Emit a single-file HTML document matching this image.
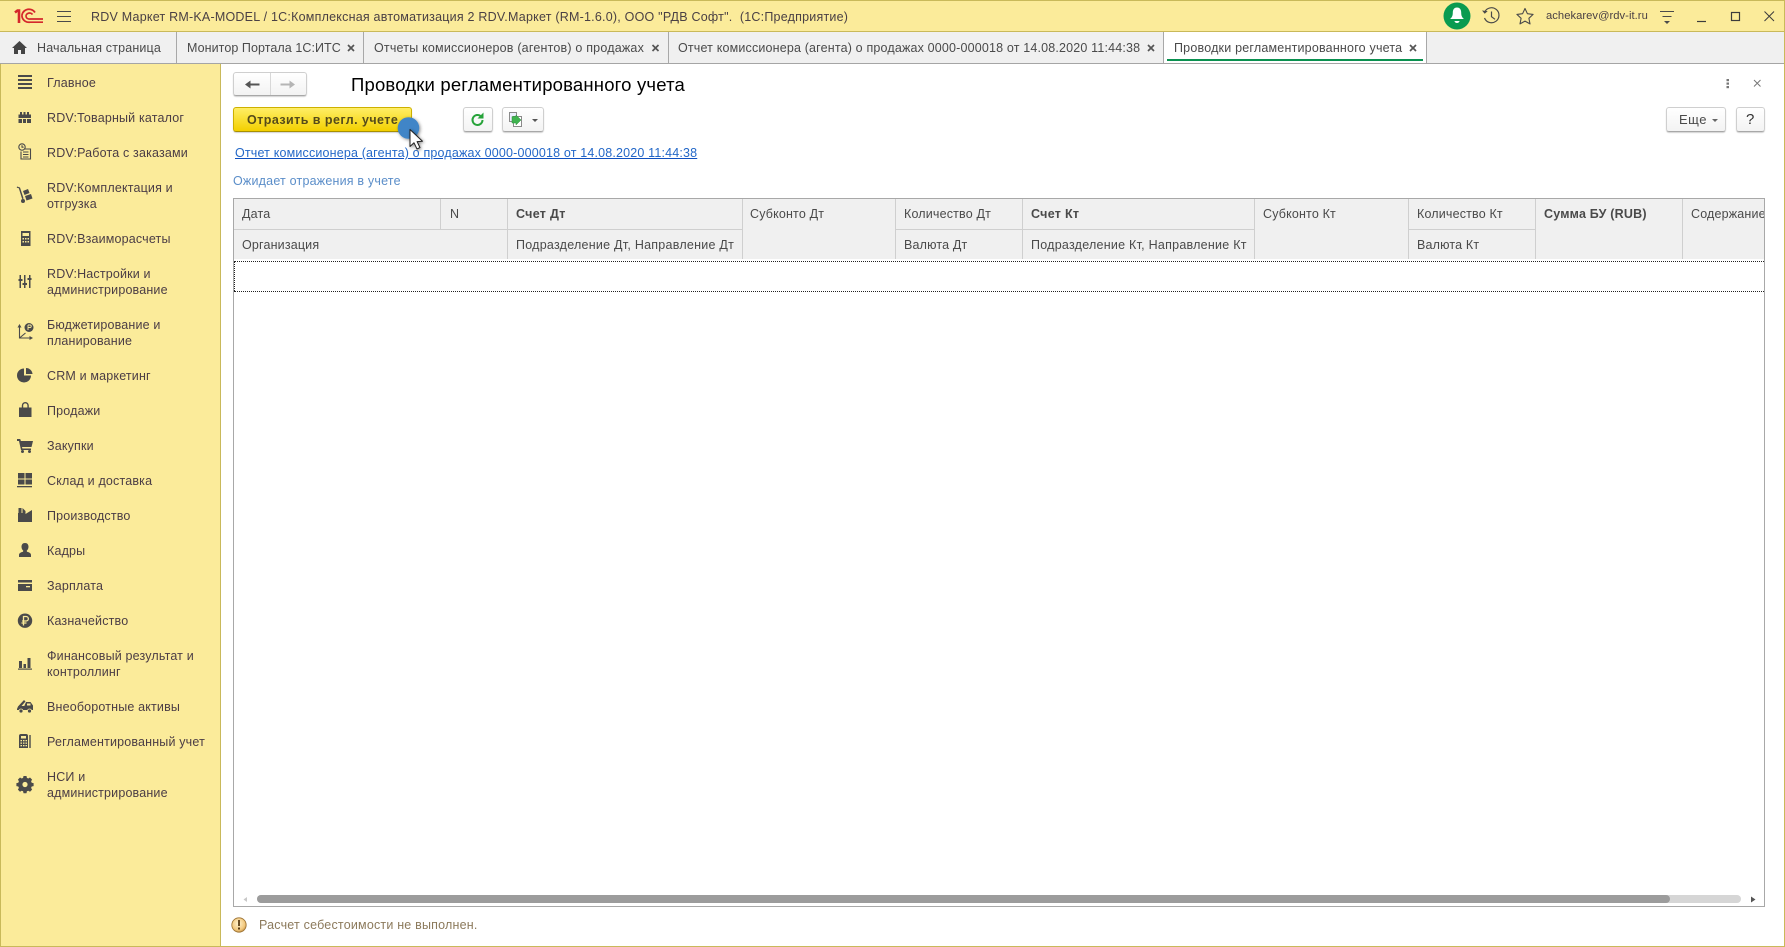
<!DOCTYPE html>
<html lang="ru"><head><meta charset="utf-8"><title>Проводки регламентированного учета</title>
<style>
html,body{margin:0;padding:0;background:#fff}
body{width:1785px;height:947px;position:relative;overflow:hidden;font-family:"Liberation Sans",Arial,sans-serif;font-size:12.5px;letter-spacing:.17px;color:#4a4044}
.b{position:absolute;box-sizing:border-box}
.t{position:absolute;white-space:nowrap;line-height:16px;height:16px}
.s .t{color:#4b3d45}
.h{color:#4a4a4a}
.g{font-weight:bold;letter-spacing:.2px}
.btn{position:absolute;box-sizing:border-box;border:1px solid #cfcfcf;border-bottom:1px solid #a8a8a8;border-radius:3px;background:linear-gradient(#fff,#f3f3f3);box-shadow:0 1px 1px rgba(0,0,0,.18)}
svg{position:absolute;left:0;top:0}
</style></head><body>

<div class="b" style="left:0;top:0;width:1785px;height:32px;background:#fbeb9a;border-top:1px solid #c9b95a;border-bottom:1px solid #c9b95a"></div>
<div class="b" style="left:0;top:32px;width:1785px;height:32px;background:#f0f0f0;border-bottom:1px solid #a5a5a5"></div>
<div class="b" style="left:1164px;top:32px;width:262px;height:31px;background:#fff"></div>
<div class="b" style="left:176px;top:32px;width:1px;height:31px;background:#a8a8a8"></div>
<div class="b" style="left:363px;top:32px;width:1px;height:31px;background:#a8a8a8"></div>
<div class="b" style="left:668px;top:32px;width:1px;height:31px;background:#a8a8a8"></div>
<div class="b" style="left:1163px;top:32px;width:1px;height:31px;background:#a8a8a8"></div>
<div class="b" style="left:1426px;top:32px;width:1px;height:31px;background:#a8a8a8"></div>
<div class="b" style="left:1167px;top:59px;width:256px;height:2px;background:#0a9150"></div>

<div class="b" style="left:0;top:64px;width:221px;height:883px;background:#fbeb9a;border-left:1px solid #c9b95a;border-right:1px solid #c9b95a"></div>
<div class="b" style="left:0;top:946px;width:1785px;height:1px;background:#c9b95a"></div>
<div class="b" style="left:1784px;top:0;width:1px;height:947px;background:#c9b95a"></div>

<div class="t" style="left:91px;top:9px;letter-spacing:.22px">RDV Маркет RM-KA-MODEL / 1С:Комплексная автоматизация 2 RDV.Маркет (RM-1.6.0), ООО "РДВ Софт".&nbsp; (1С:Предприятие)</div>
<div class="t" style="left:1546px;top:8px;font-size:11.2px;letter-spacing:.05px">achekarev@rdv-it.ru</div>
<div class="t h" style="left:37px;top:40px">Начальная страница</div>
<div class="t h" style="left:187px;top:40px;letter-spacing:.07px">Монитор Портала 1С:ИТС</div>
<div class="t h" style="left:374px;top:40px;letter-spacing:.2px">Отчеты комиссионеров (агентов) о продажах</div>
<div class="t h" style="left:678px;top:40px">Отчет комиссионера (агента) о продажах 0000-000018 от 14.08.2020 11:44:38</div>
<div class="t h" style="left:1174px;top:40px;letter-spacing:.2px">Проводки регламентированного учета</div>

<div class="s">
<div class="t" style="left:47px;top:75px">Главное</div>
<div class="t" style="left:47px;top:110px">RDV:Товарный каталог</div>
<div class="t" style="left:47px;top:145px">RDV:Работа с заказами</div>
<div class="t" style="left:47px;top:180px">RDV:Комплектация и</div>
<div class="t" style="left:47px;top:196px">отгрузка</div>
<div class="t" style="left:47px;top:231px">RDV:Взаиморасчеты</div>
<div class="t" style="left:47px;top:266px">RDV:Настройки и</div>
<div class="t" style="left:47px;top:282px">администрирование</div>
<div class="t" style="left:47px;top:317px">Бюджетирование и</div>
<div class="t" style="left:47px;top:333px">планирование</div>
<div class="t" style="left:47px;top:368px">CRM и маркетинг</div>
<div class="t" style="left:47px;top:403px">Продажи</div>
<div class="t" style="left:47px;top:438px">Закупки</div>
<div class="t" style="left:47px;top:473px">Склад и доставка</div>
<div class="t" style="left:47px;top:508px">Производство</div>
<div class="t" style="left:47px;top:543px">Кадры</div>
<div class="t" style="left:47px;top:578px">Зарплата</div>
<div class="t" style="left:47px;top:613px">Казначейство</div>
<div class="t" style="left:47px;top:648px">Финансовый результат и</div>
<div class="t" style="left:47px;top:664px">контроллинг</div>
<div class="t" style="left:47px;top:699px">Внеоборотные активы</div>
<div class="t" style="left:47px;top:734px">Регламентированный учет</div>
<div class="t" style="left:47px;top:769px">НСИ и</div>
<div class="t" style="left:47px;top:785px">администрирование</div>
</div>

<div class="t" style="left:351px;top:74px;font-size:18.5px;letter-spacing:.18px;line-height:22px;height:22px;color:#000">Проводки регламентированного учета</div>

<div class="btn" style="left:233px;top:72px;width:74px;height:24px"></div>
<div class="b" style="left:270px;top:73px;width:1px;height:22px;background:#d8d8d8"></div>
<div class="btn" style="left:233px;top:107px;width:179px;height:25px;background:linear-gradient(#ffee66,#f3d000);border:1px solid #cdb000;border-bottom-color:#a89000"></div>
<div class="t g" style="left:247px;top:112px;color:#554b1a;letter-spacing:.45px">Отразить в регл. учете</div>
<div class="btn" style="left:463px;top:107px;width:30px;height:25px"></div>
<div class="btn" style="left:502px;top:107px;width:42px;height:25px"></div>
<div class="btn" style="left:1666px;top:107px;width:60px;height:25px"></div>
<div class="t" style="left:1679px;top:112px;color:#4a4a4a;font-size:13px;letter-spacing:.5px">Еще</div>
<div class="btn" style="left:1736px;top:107px;width:29px;height:25px"></div>
<div class="t" style="left:1746px;top:112px;color:#333;font-size:15px">?</div>

<div class="t" style="left:235px;top:145px;color:#2468c8;text-decoration:underline;text-decoration-color:#0f50c0">Отчет комиссионера (агента) о продажах 0000-000018 от 14.08.2020 11:44:38</div>
<div class="t" style="left:233px;top:173px;color:#5b8ec9;letter-spacing:.2px">Ожидает отражения в учете</div>

<div class="b" style="left:233px;top:198px;width:1532px;height:709px;border:1px solid #a8a8a8;overflow:hidden;background:#fff">
  <div class="b" style="left:0;top:0;width:1530px;height:60px;background:#f0f0f0"></div>
  <div class="b" style="left:0;top:30px;width:274px;height:1px;background:#cfcfcf"></div>
  <div class="b" style="left:274px;top:30px;width:234px;height:1px;background:#cfcfcf"></div>
  <div class="b" style="left:661px;top:30px;width:127px;height:1px;background:#cfcfcf"></div>
  <div class="b" style="left:788px;top:30px;width:232px;height:1px;background:#cfcfcf"></div>
  <div class="b" style="left:1174px;top:30px;width:127px;height:1px;background:#cfcfcf"></div>
  <div class="b" style="left:206px;top:0;width:1px;height:30px;background:#cfcfcf"></div>
  <div class="b" style="left:273px;top:0;width:1px;height:60px;background:#cfcfcf"></div>
  <div class="b" style="left:508px;top:0;width:1px;height:60px;background:#cfcfcf"></div>
  <div class="b" style="left:661px;top:0;width:1px;height:60px;background:#cfcfcf"></div>
  <div class="b" style="left:788px;top:0;width:1px;height:60px;background:#cfcfcf"></div>
  <div class="b" style="left:1020px;top:0;width:1px;height:60px;background:#cfcfcf"></div>
  <div class="b" style="left:1174px;top:0;width:1px;height:60px;background:#cfcfcf"></div>
  <div class="b" style="left:1301px;top:0;width:1px;height:60px;background:#cfcfcf"></div>
  <div class="b" style="left:1448px;top:0;width:1px;height:60px;background:#cfcfcf"></div>
  <div class="t h" style="left:8px;top:7px">Дата</div>
  <div class="t h" style="left:216px;top:7px">N</div>
  <div class="t h g" style="left:282px;top:7px;letter-spacing:.3px">Счет Дт</div>
  <div class="t h" style="left:516px;top:7px">Субконто Дт</div>
  <div class="t h" style="left:670px;top:7px">Количество Дт</div>
  <div class="t h g" style="left:797px;top:7px;letter-spacing:.3px">Счет Кт</div>
  <div class="t h" style="left:1029px;top:7px">Субконто Кт</div>
  <div class="t h" style="left:1183px;top:7px">Количество Кт</div>
  <div class="t h g" style="left:1310px;top:7px">Сумма БУ (RUB)</div>
  <div class="t h" style="left:1457px;top:7px">Содержание</div>
  <div class="t h" style="left:8px;top:38px">Организация</div>
  <div class="t h" style="left:282px;top:38px;letter-spacing:.25px">Подразделение Дт, Направление Дт</div>
  <div class="t h" style="left:670px;top:38px">Валюта Дт</div>
  <div class="t h" style="left:797px;top:38px;letter-spacing:.25px">Подразделение Кт, Направление Кт</div>
  <div class="t h" style="left:1183px;top:38px">Валюта Кт</div>
  <div class="b" style="left:0;top:62px;width:1530px;height:0;border-top:1px dotted #222"></div>
  <div class="b" style="left:0;top:92px;width:1530px;height:0;border-top:1px dotted #222"></div>
  <div class="b" style="left:0;top:62px;width:0;height:30px;border-left:1px dotted #222"></div>
  <div class="b" style="left:23px;top:696px;width:1484px;height:8px;border-radius:4px;background:#d6d6d6"></div>
  <div class="b" style="left:23px;top:696px;width:1413px;height:8px;border-radius:4px;background:#9c9c9c"></div>
</div>

<div class="t" style="left:259px;top:917px;color:#8c7a5c;letter-spacing:.2px">Расчет себестоимости не выполнен.</div>

<svg width="1785" height="947" viewBox="0 0 1785 947" fill="none">
  <defs>
    <radialGradient id="w" cx=".45" cy=".4" r=".65"><stop offset="0" stop-color="#fff3cf"/><stop offset=".7" stop-color="#f2c77c"/><stop offset="1" stop-color="#b8843a"/></radialGradient>
    <filter id="sh" x="-40%" y="-40%" width="180%" height="180%"><feDropShadow dx="1" dy="1" stdDeviation="1.6" flood-color="#000" flood-opacity=".45"/></filter>
  </defs>

  <!-- 1C logo -->
  <g stroke="#d4272c" fill="none">
    <path d="M15 12.500l2.500-2h1.500v12.500" stroke-width="2.600"/>
    <path d="M35 12.500A7 6.500 0 1 0 30 22.200H43" stroke-width="1.700"/>
    <path d="M32.500 14.500A3.500 3 0 1 0 30 19H43" stroke-width="1.700"/>
  </g>
  <!-- hamburger -->
  <path d="M57 11.500h14M57 16.500h14M57 21.500h14" stroke="#4a4a4a" stroke-width="1.100"/>

  <!-- bell -->
  <circle cx="1457" cy="16" r="13.500" fill="#0a9b50"/>
  <path d="M1457 7.500c-3 0-4.200 2.400-4.200 5 0 3.600-1 5-2.800 6.500h14c-1.800-1.500-2.800-2.900-2.800-6.500 0-2.600-1.200-5-4.200-5z" fill="#fff"/>
  <path d="M1454.500 21h5a2.500 2 0 0 1-5 0z" fill="#fff"/>
  <!-- history -->
  <path d="M1484.700 12a7.500 7.500 0 1 1-.2 6" stroke="#4a4a4a" stroke-width="1.200"/>
  <path d="M1482 10.500l2.700 3.200 3-2.600z" fill="#4a4a4a"/>
  <path d="M1491.500 11.500v5.200l3.500 2.600" stroke="#4a4a4a" stroke-width="1.200"/>
  <!-- star -->
  <path d="M1525 8.500l2.400 5.200 5.700.7-4.200 3.900 1.100 5.600-5-2.800-5 2.800 1.100-5.600-4.200-3.900 5.700-.7z" stroke="#4a4a4a" stroke-width="1.100" stroke-linejoin="round"/>
  <!-- system menu -->
  <path d="M1660 11.500h14M1662.500 16.500h9" stroke="#4a4a4a" stroke-width="1.100"/>
  <path d="M1664 21h6l-3 3z" fill="#4a4a4a"/>
  <!-- window -->
  <path d="M1697 21.500h9" stroke="#3c3c3c" stroke-width="1.200"/>
  <rect x="1731.500" y="12.500" width="8" height="8" stroke="#3c3c3c" stroke-width="1.200"/>
  <path d="M1764.500 11.500l9.500 9.500M1774 11.500l-9.500 9.500" stroke="#3c3c3c" stroke-width="1"/>

  <!-- tabs -->
  <path d="M12 48l7.500-7 7.500 7h-2v6h-4v-4h-3v4h-4v-6z" fill="#444"/>
  <g stroke="#555" stroke-width="1.700">
    <path d="M348 45l6 6M354 45l-6 6"/>
    <path d="M652.500 45l6 6M658.500 45l-6 6"/>
    <path d="M1148 45l6 6M1154 45l-6 6"/>
    <path d="M1410 45l6 6M1416 45l-6 6"/>
  </g>

  <!-- nav buttons -->
  <path d="M245 84.500l5.500-4v3h9v2h-9v3z" fill="#555"/>
  <path d="M295 84.500l-5.500-4v3h-9v2h9v3z" fill="#b5b5b5"/>
  <!-- kebab / close -->
  <g fill="#777"><rect x="1726.500" y="79" width="2.500" height="2.200"/><rect x="1726.500" y="82.500" width="2.500" height="2.200"/><rect x="1726.500" y="86" width="2.500" height="2.200"/></g>
  <path d="M1754 80l6.500 6.500M1760.500 80l-6.500 6.500" stroke="#777" stroke-width="1"/>
  <!-- refresh -->
  <path d="M482.500 120a5 5 0 1 1-1.500-3.600" stroke="#27a33a" stroke-width="2"/>
  <path d="M483.500 112.500v6h-6z" fill="#27a33a"/>
  <!-- doc-arrow -->
  <rect x="509.500" y="112.500" width="7" height="9" fill="#eef" stroke="#8a8a8a"/>
  <rect x="513.500" y="116.500" width="8" height="10" fill="#fff" stroke="#8a8a8a"/>
  <path d="M512 116.500h4v-1.500l5 5-5 5v-2h-4z" fill="#3fb34f" stroke="#2c8f3c" stroke-width=".5"/>
  <path d="M532 119h6l-3 3z" fill="#555"/>
  <path d="M1712 119h6l-3 3z" fill="#666"/>

  <!-- circle + cursor -->
  <circle cx="408.500" cy="128" r="10.800" fill="#3f85c7" filter="url(#sh)"/>
  <path d="M410 129.500v17l4-3.700 3 6.200 3-1.400-2.900-6 5.400-.4z" fill="#fff" stroke="#222" stroke-width="1" stroke-linejoin="round" filter="url(#sh)"/>

  <!-- scroll arrows -->
  <path d="M247 897l-3.500 2.500 3.500 2.500z" fill="#c8c8c8"/>
  <path d="M1751 896.500l4.500 3-4.500 3z" fill="#555"/>

  <!-- warning -->
  <circle cx="239" cy="925" r="7.200" fill="url(#w)" stroke="#9a7030" stroke-width=".8"/>
  <path d="M239 920v6" stroke="#5a3c14" stroke-width="1.800"/><rect x="238" y="927.500" width="2" height="2" fill="#5a3c14"/>

  <!-- sidebar icons -->
  <g fill="#4a4a4a" stroke="none">
    <rect x="18" y="75" width="14" height="2"/><rect x="18" y="79" width="14" height="2"/><rect x="18" y="83" width="14" height="2"/><rect x="18" y="87" width="14" height="2"/>

    <path d="M20 112h2v2.500h1.500V112h2v2.500H27V112h2v2.500h2v3.500H18.500v-3.500H20zM18.500 119h3.500v4h-3.500zM23 119h3v4h-3zM27 119h4v4h-4z"/>

    <g fill="none" stroke="#4a4a4a" stroke-width="1.100"><circle cx="22" cy="147" r="3.200"/><path d="M22 145.200v2h1.600"/><path d="M24 149h6.500v10H21v-7.500"/><path d="M23 152h5.500M23 154.500h5.500M23 157h5.500"/></g>

    <path d="M17 186.500l3 1 3.600 11-1.400.6-3.400-10.800-2-.6z"/><circle cx="23" cy="201" r="2"/><path d="M23 191l5-2 1.500 4-5 2zM25 196l6-2 1.500 4.500-6 2z"/>

    <path d="M21 231h9.500v15H21z"/><g fill="#fbeb9a"><rect x="22.500" y="233" width="6.500" height="3"/><rect x="22.500" y="238" width="1.500" height="1.500"/><rect x="25" y="238" width="1.500" height="1.500"/><rect x="27.500" y="238" width="1.500" height="1.500"/><rect x="22.500" y="241" width="1.500" height="1.500"/><rect x="25" y="241" width="1.500" height="1.500"/><rect x="27.500" y="241" width="1.500" height="1.500"/></g>

    <path d="M20 275h1.500v4H23v2h-1.500v7H20v-7h-1v-2h1zM24.500 275H26v8h1.500v2H26v3h-1.500v-3H23v-2h1.500zM29.500 275H31v3h1v2h-1v8h-1.500v-8H28v-2h1.500z" transform="translate(-.5 0)"/>

    <g fill="none" stroke="#4a4a4a" stroke-width="1.100"><path d="M19.500 327v11H31"/><path d="M19.500 338l6-5"/></g><path d="M19.500 324l2 3.500h-4zM33 338l-3.500 2v-4z"/><circle cx="29" cy="327.500" r="4.500"/><path d="M28 325v5M28 325h2a1 1 0 0 1 0 2.500h-2" stroke="#fbeb9a" fill="none" stroke-width=".9"/>

    <path d="M24 368.500v7h7a7 7 0 1 1-7-7z"/><path d="M26 368a6.500 6.500 0 0 1 6.500 6H26z"/>

    <path d="M19 407.500h12.500V417H19z"/><path d="M22.500 408v-2.500a2.800 2.800 0 0 1 5.600 0V408" fill="none" stroke="#4a4a4a" stroke-width="1.400"/>

    <path d="M17 439h3.200l.7 2H33l-1.500 6H22l.4 1.500H31v1.500H21l-2-9h-2z"/><circle cx="22.500" cy="451.500" r="1.500"/><circle cx="29.500" cy="451.500" r="1.500"/>

    <rect x="18" y="473" width="6.500" height="5.500"/><rect x="25.500" y="473" width="6.500" height="5.500"/><rect x="18" y="479.500" width="6.500" height="5"/><rect x="25.500" y="479.500" width="6.500" height="5"/><rect x="17" y="486" width="15" height="1.300"/>

    <path d="M18 522v-9h.5v-5h3v5h1v-5h0l3 3v3l6.500-4v12z"/>

    <path d="M25 543c2.500 0 3.500 1.800 3.500 3.800 0 1.700-.8 3.200-1.800 4l.3 1c2.500.7 4 1.500 4 3.200v2h-12v-2c0-1.700 1.500-2.500 4-3.200l.3-1c-1-.8-1.800-2.300-1.800-4 0-2 1-3.800 3.500-3.800z"/>

    <path d="M18 580h14v2.500H18zM18 584h14v7H18z"/><rect x="26" y="586" width="4" height="1.300" fill="#fbeb9a"/>

    <circle cx="25" cy="620.700" r="7.200"/><path d="M23.500 625.500v-9h2.600a2.200 2.200 0 0 1 0 4.500h-4M21.500 623h5" stroke="#fbeb9a" stroke-width="1.300" fill="none"/>

    <rect x="19" y="661" width="3" height="7"/><rect x="23.500" y="664" width="2.500" height="4"/><rect x="27.500" y="658" width="3" height="10"/><rect x="18" y="668.500" width="14" height="1.200"/>

    <path d="M17 709l1-2.500 6-6.500 1.500 1.500-4 4.500h3v-.5L26 702h4.500l2.500 3.500v4.500H17z"/><circle cx="21" cy="711" r="2" stroke="#fbeb9a" stroke-width=".8"/><circle cx="29.500" cy="711" r="2" stroke="#fbeb9a" stroke-width=".8"/><rect x="27" y="703.500" width="3.500" height="2" fill="#fbeb9a"/>

    <path d="M19 736a2 2 0 0 1 2-2h5a2 2 0 0 1 2 2v12h-9z"/><g fill="#fbeb9a"><rect x="21" y="736" width="5" height="2.500"/><rect x="20.500" y="740" width="1.500" height="1.300"/><rect x="23" y="740" width="1.500" height="1.300"/><rect x="25.500" y="740" width="1.500" height="1.300"/><rect x="20.500" y="742.500" width="1.500" height="1.300"/><rect x="23" y="742.500" width="1.500" height="1.300"/><rect x="25.500" y="742.500" width="1.500" height="1.300"/><rect x="20.500" y="745" width="1.500" height="1.300"/><rect x="23" y="745" width="1.500" height="1.300"/><rect x="25.500" y="745" width="1.500" height="1.300"/></g><rect x="29.300" y="735" width="1.400" height="13"/>

    <path d="M23.500 777.500h3l.4 1.900 1.400.6 1.700-1 2.100 2.100-1 1.700.6 1.400 1.900.4v3l-1.900.4-.6 1.400 1 1.700-2.100 2.100-1.700-1-1.400.6-.4 1.900h-3l-.4-1.900-1.400-.6-1.700 1-2.100-2.100 1-1.700-.6-1.400-1.900-.4v-3l1.900-.4.6-1.400-1-1.700 2.100-2.100 1.700 1 1.400-.6z" transform="translate(0 -1.500)"/><circle cx="25" cy="784.500" r="2.600" fill="#fbeb9a"/>
  </g>
</svg>
</body></html>
